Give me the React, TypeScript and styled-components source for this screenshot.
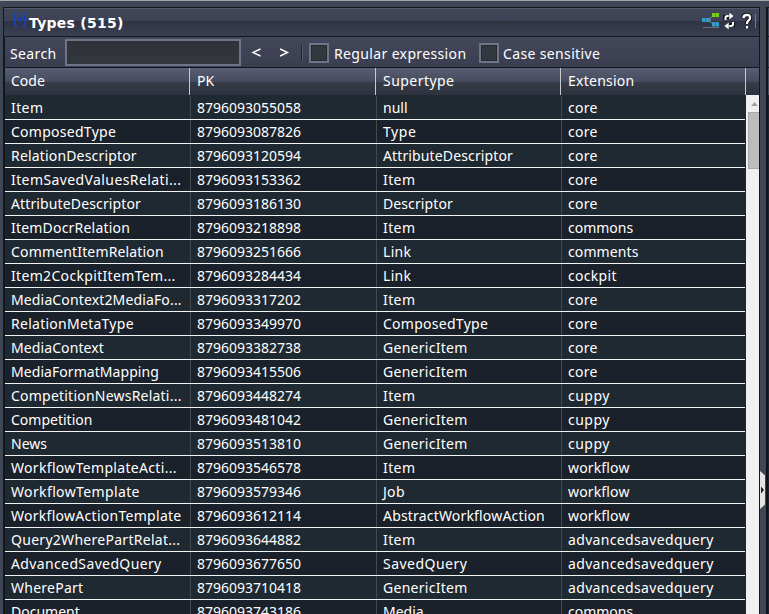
import React from 'react';
import styled, { createGlobalStyle } from 'styled-components';

const GlobalStyle = createGlobalStyle`
  html, body { margin: 0; height: 100%; overflow: hidden; background: #3f4756; }
  * { box-sizing: border-box; }
  #root { height: 614px; }
`;

const Page = styled.div`
  width: 769px;
  height: 614px;
  border-top: 1px solid #a5a7a9;
  padding: 6px 0 0 3px;
  display: flex;
  overflow: hidden;
  background: #3f4756;
  color: #fff;
  font: 14px/24px 'Noto Sans', sans-serif;
`;

const Panel = styled.section`
  width: 757px;
  flex: none;
  height: 607px;
  border: solid #14171d;
  border-width: 1px 1px 0;
  display: flex;
  flex-direction: column;
`;

const TitleBar = styled.header`
  height: 29px;
  flex: none;
  display: flex;
  border-bottom: 1px solid #14171d;
  background: linear-gradient(#545a6c 0 1px, #414659 1px, #3e4256 13px, #2f3443 13px, #3a3f52 28px);
`;

const TypeIcon = styled.svg`
  width: 16px;
  height: 16px;
  flex: none;
  margin: 4px 0 0 8px;
`;

const Title = styled.h1`
  margin: 3px 0 0 1px;
  font: bold 14px/24px 'DejaVu Sans', sans-serif;
  letter-spacing: 0.27px;
  white-space: pre;
  flex: 1;
`;

const ToolIcons = styled.svg`
  width: 55px;
  height: 28px;
  margin-right: 2px;
`;

const Content = styled.div`
  flex: 1;
  min-height: 0;
  border-left: 1px solid #14171d;
  display: flex;
  flex-direction: column;
`;

const Toolbar = styled.div`
  height: 31px;
  flex: none;
  display: flex;
  align-items: center;
  border-bottom: 1px solid #14171d;
  background: linear-gradient(#43475a, #3b3e50);
`;

const Label = styled.label<{ $width: number; $gap: number }>`
  width: ${p => p.$width}px;
  margin-left: ${p => p.$gap}px;
  padding-top: 3px;
  white-space: nowrap;
  letter-spacing: 0.36px;
`;

const SearchField = styled.input`
  width: 176px;
  height: 27px;
  margin: 0 0 0 6px;
  padding: 2px 4px;
  border: 2px solid #6e7589;
  border-radius: 0;
  background: linear-gradient(#303139, #33373e);
  color: inherit;
  font: inherit;
  outline: 0;
`;

const Arrow = styled.button<{ $gap: number }>`
  width: 10px;
  height: 24px;
  margin: 2px 0 0 ${p => p.$gap}px;
  padding: 0;
  border: 0;
  background: none;
  color: #fff;
  display: flex;
  align-items: center;
`;

const Divider = styled.div`
  width: 2px;
  height: 15px;
  margin-left: 11px;
  border-left: 1px solid #20232e;
  border-right: 1px solid #555a6c;
`;

const Check = styled.div<{ $gap: number }>`
  width: 20px;
  height: 20px;
  margin: 2px 0 0 ${p => p.$gap}px;
  border: 2px solid #6e7589;
  background: #33373e;
  box-shadow: inset 0 0 0 1px #272a30;
`;

const HeaderRow = styled.div`
  height: 27px;
  flex: none;
  display: grid;
  grid-template-columns: 185px 186px 185px 185px 1fr;
  background: linear-gradient(#585e73, #454a5d 14px, #383c4a 14px, #2e323d 27px);
`;

const HeaderCell = styled.div<{ $spacing?: number }>`
  padding: 1px 0 0 7px;
  border-right: 1px solid #c6c8cc;
  letter-spacing: ${p => p.$spacing ?? 0}px;
  &:first-child { padding-left: 6px; }
`;

const Body = styled.div`
  flex: 1;
  min-height: 0;
  display: flex;
`;

const Rows = styled.div`
  width: 741px;
  padding-top: 1px;
  background: #1f2932;
  overflow: hidden;
`;

const Row = styled.div`
  width: 740px;
  height: 24px;
  display: grid;
  grid-template-columns: 186px 186px 185px 183px;
  border-bottom: 1px solid #f2f4f4;
  background: #1f2932;
  &:nth-child(even) { background: #1b212a; }
`;

const Cell = styled.div<{ $spacing: number }>`
  padding-left: 6px;
  border-right: 1px solid #474849;
  white-space: nowrap;
  overflow: hidden;
  letter-spacing: ${p => p.$spacing}px;
  &:last-child { border-right: 0; }
`;

const ScrollTrack = styled.div`
  flex: 1;
  background: #f0f0f0;
  display: flex;
  flex-direction: column;
  overflow: hidden;
`;

const ScrollArrow = styled.svg`
  width: 13px;
  height: 17px;
  flex: none;
`;

const ScrollThumb = styled.div`
  height: 57px;
  width: 16px;
  flex: none;
  margin-left: 2px;
  border: 1px solid #a8a8a8;
  background: #bcbcbc;
`;

const Gutter = styled.div`
  width: 6px;
  padding-top: 464px;
`;

const Handle = styled.svg`
  display: block;
  width: 6px;
  height: 38px;
`;

const NextPanel = styled.div`
  width: 3px;
  flex: none;
  border-left: 2px solid #111319;
  border-top: 1px solid #14171d;
  background: linear-gradient(#414659 0 28px, #14171d 28px 29px, #414558 29px 59px, #14171d 59px 60px, #454a5d 60px 87px, #1b212a 87px);
`;

const types: [string, string, string, string][] = [
  ['Item', '8796093055058', 'null', 'core'],
  ['ComposedType', '8796093087826', 'Type', 'core'],
  ['RelationDescriptor', '8796093120594', 'AttributeDescriptor', 'core'],
  ['ItemSavedValuesRelati...', '8796093153362', 'Item', 'core'],
  ['AttributeDescriptor', '8796093186130', 'Descriptor', 'core'],
  ['ItemDocrRelation', '8796093218898', 'Item', 'commons'],
  ['CommentItemRelation', '8796093251666', 'Link', 'comments'],
  ['Item2CockpitItemTem...', '8796093284434', 'Link', 'cockpit'],
  ['MediaContext2MediaFo...', '8796093317202', 'Item', 'core'],
  ['RelationMetaType', '8796093349970', 'ComposedType', 'core'],
  ['MediaContext', '8796093382738', 'GenericItem', 'core'],
  ['MediaFormatMapping', '8796093415506', 'GenericItem', 'core'],
  ['CompetitionNewsRelati...', '8796093448274', 'Item', 'cuppy'],
  ['Competition', '8796093481042', 'GenericItem', 'cuppy'],
  ['News', '8796093513810', 'GenericItem', 'cuppy'],
  ['WorkflowTemplateActi...', '8796093546578', 'Item', 'workflow'],
  ['WorkflowTemplate', '8796093579346', 'Job', 'workflow'],
  ['WorkflowActionTemplate', '8796093612114', 'AbstractWorkflowAction', 'workflow'],
  ['Query2WherePartRelat...', '8796093644882', 'Item', 'advancedsavedquery'],
  ['AdvancedSavedQuery', '8796093677650', 'SavedQuery', 'advancedsavedquery'],
  ['WherePart', '8796093710418', 'GenericItem', 'advancedsavedquery'],
  ['Document', '8796093743186', 'Media', 'commons'],
];

const tracking: Record<string, number> = {
  Item: 0.4,
  Type: 0.6,
  Link: 0.3,
  Job: 0.3,
  core: 0.3,
  cuppy: 0.5,
  cockpit: 0.3,
  workflow: 0.15,
  comments: 0.1,
  ComposedType: 0.27,
  RelationDescriptor: 0.17,
  'ItemSavedValuesRelati...': 0.4,
  AttributeDescriptor: 0.13,
  Descriptor: 0.1,
  ItemDocrRelation: 0.2,
  CommentItemRelation: 0.16,
  'Item2CockpitItemTem...': 0.33,
  'MediaContext2MediaFo...': 0.14,
  RelationMetaType: 0.27,
  MediaContext: 0.1,
  MediaFormatMapping: 0.06,
  GenericItem: 0.27,
  'CompetitionNewsRelati...': 0.22,
  'WorkflowTemplateActi...': 0.32,
  WorkflowTemplate: 0.37,
  WorkflowActionTemplate: 0.28,
  AbstractWorkflowAction: 0.18,
  'Query2WherePartRelat...': 0.28,
  AdvancedSavedQuery: 0.37,
  SavedQuery: 0.48,
  WherePart: 0.25,
  advancedsavedquery: 0.34,
};

export default function App() {
  return (
    <>
      <GlobalStyle />
      <Page>
        <Panel>
          <TitleBar>
            <TypeIcon viewBox="0 0 16 16" fill="none" stroke="#1741b4" strokeWidth="1.900">
              <path d="M5.500 1.500H4Q3 1.500 3 3v3L1.800 7.500 3 9v3.500Q3 14 4 14h1.500M10.500 1.500H12q1 0 1 1.500v3l1.200 1.500L13 9v3.500q0 1.500-1 1.500h-1.500" />
              <path d="M5.500 5l2.500 5 2.500-5M8 5v3" strokeWidth="1.400" />
            </TypeIcon>
            <Title>Types (515)</Title>
            <ToolIcons viewBox="0 0 55 28">
              <path d="M10 8.500L8 10.500v3l2 2" fill="none" stroke="#8e9ba6" />
              <path d="M1 19.500h16" stroke="#697080" />
              <path d="M0 10h8v4H0z M10 14h7v4.500h-7z" fill="#369ac7" />
              <path d="M10 5h7v4h-7z" fill="#78d117" />
              <path d="M3.500 10v4M13.500 14v4" stroke="#277da8" />
              <path d="M13.500 5v4" stroke="#58a90c" />
              <g fill="none" stroke="#15171c" strokeWidth="4">
                <path d="M23 12V9h6M31 14v3h-6" />
              </g>
              <path d="M23.500 12V10q0-2 2-2h2.500M31 14v2q0 2-2 2h-2.500" fill="none" stroke="#fff" strokeWidth="2" />
              <path d="M27 4l5 4-5 4zM27 14l-5 4 5 4z" fill="#fff" stroke="#15171c" strokeWidth=".5" />
              <path d="M41.500 10Q41.500 7 45 7t3 3q0 2-2 3-1 1-1 3M45 18.500v2" fill="none" stroke="#15171c" strokeWidth="4.500" />
              <path d="M41.500 10Q41.500 7 45 7t3 3q0 2-2 3-1 1-1 3M45 18v2.500" fill="none" stroke="#fff" strokeWidth="2.300" />
              <path d="M53.500 6v14" stroke="#a86b49" />
            </ToolIcons>
          </TitleBar>
          <Content>
            <Toolbar>
              <Label $width={49} $gap={5}>Search</Label>
              <SearchField aria-label="Search" />
              <Arrow $gap={10} aria-label="Previous">
                <svg width="10" height="10" viewBox="0 0 10 10"><path d="M9.500 1L2 4.500 9.500 8" fill="none" stroke="#fff" strokeWidth="1.400" /></svg>
              </Arrow>
              <Arrow $gap={19} aria-label="Next">
                <svg width="10" height="10" viewBox="0 0 10 10"><path d="M0 1l7.500 3.500L0 8" fill="none" stroke="#fff" strokeWidth="1.400" /></svg>
              </Arrow>
              <Divider />
              <Check $gap={6} />
              <Label $width={134} $gap={5}>Regular expression</Label>
              <Check $gap={11} />
              <Label $width={100} $gap={4}>Case sensitive</Label>
            </Toolbar>
            <HeaderRow>
              <HeaderCell>Code</HeaderCell>
              <HeaderCell>PK</HeaderCell>
              <HeaderCell $spacing={0.45}>Supertype</HeaderCell>
              <HeaderCell $spacing={0.25}>Extension</HeaderCell>
            </HeaderRow>
            <Body>
              <Rows>
                {types.map(r => (
                  <Row key={r[1]}>
                    {r.map((text, i) => <Cell key={i} $spacing={tracking[text] ?? 0}>{text}</Cell>)}
                  </Row>
                ))}
              </Rows>
              <ScrollTrack>
                <ScrollArrow viewBox="0 0 13 17"><path d="M5 11l3.500-4L12 11z" fill="#a0a0a0" /></ScrollArrow>
                <ScrollThumb />
              </ScrollTrack>
            </Body>
          </Content>
        </Panel>
        <Gutter>
          <Handle viewBox="0 0 6 38">
            <path d="M0 0l5 4.500v29L0 38z" fill="#e3e3e3" />
            <path d="M1 15.500l3 3.500-3 3.500z" fill="#222" />
          </Handle>
        </Gutter>
        <NextPanel />
      </Page>
    </>
  );
}
